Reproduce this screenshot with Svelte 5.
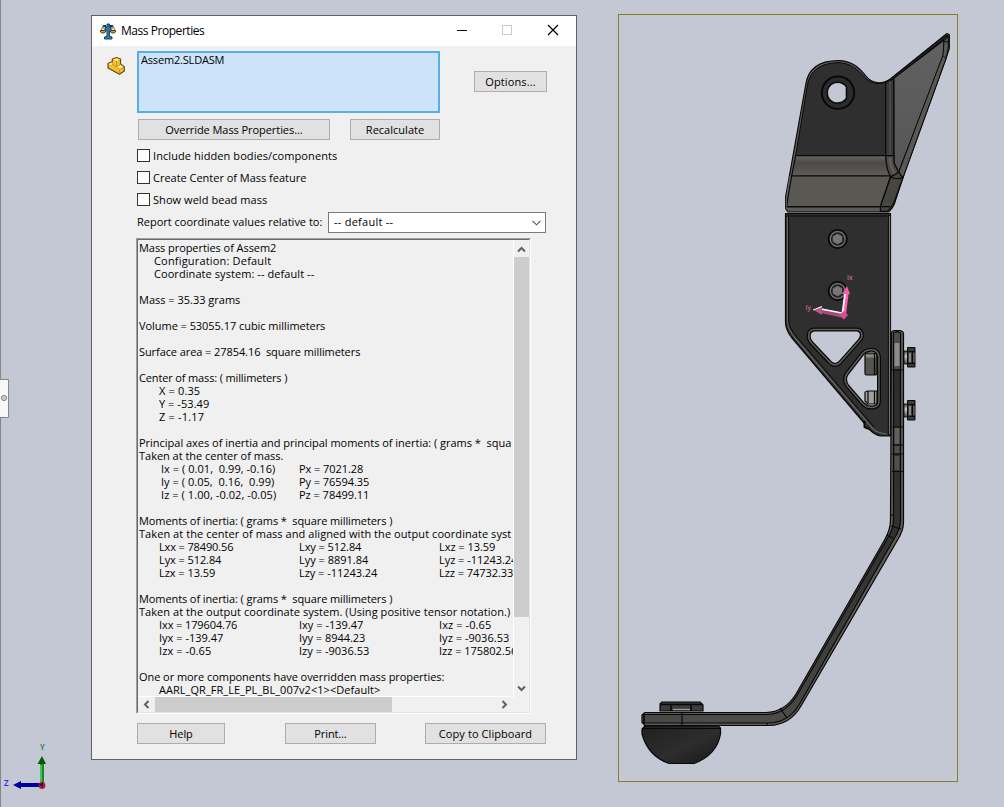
<script>
  // Spreads the letters so that a label takes the given width.
  function fit(node, width) {
    const natural = node.getBoundingClientRect().width;
    const count = node.textContent.length;
    node.style.letterSpacing = (width - 0.7 - natural) / count + 'px';
    node.style.width = width + 'px';
  }

  // Each line is a list of [left, width, text] runs.
  const lines = [
    [[0, 138, 'Mass properties of Assem2']],
    [[15, 118, 'Configuration: Default']],
    [[15, 161, 'Coordinate system: -- default --']],
    [],
    [[0, 102, 'Mass = 35.33 grams']],
    [],
    [[0, 187, 'Volume = 53055.17 cubic millimeters']],
    [],
    [[0, 222, 'Surface area = 27854.16  square millimeters']],
    [],
    [[0, 149, 'Center of mass: ( millimeters )']],
    [[20, 42, 'X = 0.35']],
    [[20, 51, 'Y = -53.49']],
    [[20, 46, 'Z = -1.17']],
    [],
    [[0, 373, 'Principal axes of inertia and principal moments of inertia: ( grams *  squa']],
    [[0, 145, 'Taken at the center of mass.']],
    [[22, 115, 'Ix = ( 0.01,  0.99, -0.16)'], [160, 65, 'Px = 7021.28']],
    [[22, 114, 'Iy = ( 0.05,  0.16,  0.99)'], [160, 71, 'Py = 76594.35']],
    [[22, 116, 'Iz = ( 1.00, -0.02, -0.05)'], [160, 71, 'Pz = 78499.11']],
    [],
    [[0, 254, 'Moments of inertia: ( grams *  square millimeters )']],
    [[0, 373, 'Taken at the center of mass and aligned with the output coordinate syst']],
    [[20, 75, 'Lxx = 78490.56'], [160, 63, 'Lxy = 512.84'], [300, 57, 'Lxz = 13.59']],
    [[20, 63, 'Lyx = 512.84'], [160, 70, 'Lyy = 8891.84'], [300, 79, 'Lyz = -11243.24']],
    [[20, 57, 'Lzx = 13.59'], [160, 79, 'Lzy = -11243.24'], [300, 75, 'Lzz = 74732.33']],
    [],
    [[0, 254, 'Moments of inertia: ( grams *  square millimeters )']],
    [[0, 372, 'Taken at the output coordinate system. (Using positive tensor notation.)']],
    [[20, 79, 'Ixx = 179604.76'], [160, 65, 'Ixy = -139.47'], [300, 53, 'Ixz = -0.65']],
    [[20, 65, 'Iyx = -139.47'], [160, 67, 'Iyy = 8944.23'], [300, 71, 'Iyz = -9036.53']],
    [[20, 53, 'Izx = -0.65'], [160, 71, 'Izy = -9036.53'], [300, 79, 'Izz = 175802.56']],
    [],
    [[0, 306, 'One or more components have overridden mass properties:']],
    [[20, 222, 'AARL_QR_FR_LE_PL_BL_007v2<1><Default>']]
  ];

  // Left edge of a run measured from the end of the previous one.
  const gap = (line, i) => (i === 0 ? line[0][0] : line[i][0] - line[i - 1][0] - line[i - 1][1]);

  const checks = [
    [185, 'Include hidden bodies/components'],
    [154, 'Create Center of Mass feature'],
    [115, 'Show weld bead mass']
  ];

  const slots = [
    'M814 329.500H857C862 330 863.500 336 860 340L841 361.500Q835 368.500 829 361.500L811 342.500C807 337 808 330 814 329.500Z',
    'M863 353Q867 349 874 350Q879 352 879 358V401Q879 407.500 872 407.500Q867 408 863 404L847 385.500Q843 379 847 373.500Z'
  ];
</script>

<main class="viewport">
  <svg class="scene" width="1004" height="807" viewBox="0 0 1004 807">
    <defs>
      <linearGradient id="bend" x1="0" y1="0" x2="0" y2="1">
        <stop offset="0" stop-color="#68665f" /><stop offset=".35" stop-color="#4b4a46" /><stop offset="1" stop-color="#5d5c57" />
      </linearGradient>
      <linearGradient id="wing" x1="0" y1="1" x2="0" y2="0">
        <stop offset="0" stop-color="#565656" /><stop offset="1" stop-color="#616161" />
      </linearGradient>
      <linearGradient id="arm" x1="0" y1="0" x2="0" y2="1">
        <stop offset="0" stop-color="#2b2b2b" /><stop offset=".6" stop-color="#333" /><stop offset="1" stop-color="#4a4946" />
      </linearGradient>
      <linearGradient id="ball" x1="0" y1="0" x2="1" y2="1">
        <stop offset="0" stop-color="#202020" /><stop offset=".55" stop-color="#2d2d2d" /><stop offset="1" stop-color="#181818" />
      </linearGradient>
      <linearGradient id="screw" x1="0" y1="0" x2="0" y2="1">
        <stop offset="0" stop-color="#444" /><stop offset=".4" stop-color="#d0d0d0" /><stop offset="1" stop-color="#444" />
      </linearGradient>
    </defs>

    <path d="M.5 0V807" stroke="#85858a" />
    <path d="M0 379.500H8.500V417.500H0" fill="#f8f8f8" stroke="#85858a" />
    <circle cx="4" cy="398" r="2.600" fill="#ccc" stroke="#888" />
    <rect x="618.500" y="14.500" width="339" height="767" fill="none" stroke="#858025" />

    <!-- upper bracket -->
    <g transform="translate(770 20) scale(.33333)" stroke="#080808" stroke-width="3.500" stroke-linejoin="round">
      <path d="M47 566V530L107 195C114 145 150 122 205 122C247 122 268 145 285 165C306 192 335 195 362 176L530 41L538 44V85L528 116L399 473L373 552Q369 563 356 576H54Z" fill="#5d5b56" />
      <path d="M77 407L112 197C119 152 152 129 205 128C244 129 265 151 281 169C302 192 325 194 347 187V407Z" fill="#2f2f2f" stroke-width="3" />
      <path d="M347 187Q361 184 372 174V407H347Z" fill="#393938" />
      <path d="M360 183V405" stroke="#4d4c49" stroke-width="5" />
      <path d="M372 174L522 60V105L386 457L372 429Z" fill="url(#wing)" />
      <path d="M362 176L526 45L534 48L372 174" fill="#222" stroke-width="3" />
      <path d="M522 62L535 49V84L528 116L399 473L386 457L519 105Z" fill="#5a5852" stroke-width="3" />
      <path d="M523 65H537M518 106L528 116" stroke-width="3" />
      <path d="M77 407H347L351 440L362 468H65Z" fill="url(#bend)" />
      <path d="M347 407H372V429L386 457L362 471Q349 449 347 407Z" fill="#4d4b47" />
      <path d="M359 413Q361 441 375 463" stroke="#656158" stroke-width="6" fill="none" />
      <path d="M65 468H362L331 560H50L54 530Z" fill="#595853" />
      <path d="M362 471L386 457L399 473L370 552Q362 565 351 574H331V560Z" fill="#484641" />
      <path d="M362 471Q380 480 399 473M331 560H360M47 560H331" fill="none" />
      <path d="M59 470L49 540V568" fill="none" stroke="#77746d" stroke-width="2" />
      <circle cx="204" cy="218" r="48.500" fill="#2c2c2c" stroke-width="6" />
      <path d="M175 218C175 201 188 190 203 190Q217 190 226 201V235Q217 246 203 246C186 246 175 235 175 218Z" fill="#c4c8d4" stroke="#080808" stroke-width="11" />
      <path d="M175 218C175 201 188 190 203 190Q217 190 226 201V235Q217 246 203 246C186 246 175 235 175 218Z" fill="#c4c8d4" stroke="#c4c8d4" stroke-width="2" />
    </g>

    <!-- mounting plate -->
    <g stroke="#080808" stroke-width="1.200" stroke-linejoin="round">
      <path fill-rule="evenodd" fill="#2f2f2f" d="M785.500 213.500H890.500V436H881Q875 435 870 430L792 338Q785.500 330 785.500 322Z{slots[0]}{slots[1]}" />
      <path d="M786.500 216H887M888.500 215V435" />
      <path d="M889.500 216V434" stroke="#7a7770" />
      <path d="M787.500 217V322Q788 329 795 338L873 429Q877 433 887 434" fill="none" stroke="#66645e" />
      <path d="M788.700 217V321Q789 328 796 336L874 427" fill="none" stroke-width="1" />
      <rect x="865" y="353" width="12" height="22" rx="1.500" fill="#555451" />
      <path d="M866 356H876" stroke="#888" stroke-width="3" />
      <path d="M865 393Q865 391 868 391H877V404H868L865 401Z" fill="#a0a09e" />
      <path d="M868 391V403M874.500 353V375M874.500 391V404" />
      <path d="M864.500 421V427L869 429" fill="#444" stroke-width="2" />
      {#each slots as d}
        <path {d} fill="none" stroke-width="4" />
        <path {d} fill="none" stroke="#5f5e5a" stroke-width="1.500" />
      {/each}
      {#each [239, 291] as y}
        <circle cx="837.700" cy={y} r="9.300" fill="#222" stroke-width="1.500" />
        <circle cx="837.700" cy={y} r="7.400" fill="#1c1c1c" stroke="#777" stroke-width="1.200" />
        <path d="M837.700 {y - 5}L842 {y - 2.500}V{y + 2.500}L837.700 {y + 5}L833 {y + 2.500}V{y - 2.500}Z" fill="#777" stroke="#777" stroke-width=".6" />
      {/each}
    </g>

    <!-- principal axes marker -->
    <path d="M847 291L844 314" stroke="#ff5fac" stroke-width="4" />
    <path d="M845 294L842.500 313" stroke="#fff" stroke-width="1.800" />
    <path d="M842 294L847 286L850 294Z" fill="#f25ca8" />
    <path d="M821 311L844 316" stroke="#a8487b" stroke-width="4" />
    <path d="M821 309L842 313" stroke="#fff" stroke-width="1.300" />
    <path d="M813.500 310L822 306V315Z" fill="#bb568d" /><path d="M813 310L822 306.500" stroke="#fff" />
    <path d="M839 315L844 311L848 315L844 319.500Z" fill="#d4508f" />
    <text x="847" y="279.500" class="axis">Ix</text><text x="805.500" y="309.500" class="axis">Iy</text>

    <!-- arm, screws and foot -->
    <g stroke="#080808" stroke-width="1.200" stroke-linejoin="round">
      {#each [347, 400] as y}
        <rect x="904" y={y + 4} width="3.500" height="13" fill="url(#screw)" stroke-width=".8" />
        <path d="M907.500 {y + .5}H915V{y + 20}H907.500Z" fill="#3b3b39" stroke-width="1" />
        <path d="M907.500 {y + 4.500}H915M907.500 {y + 16.500}H915M912.500 {y + 4}V{y + 16}" />
        <path d="M910 {y + 6}V{y + 15}" stroke="#a5a5a2" stroke-width="1.500" />
        <path d="M914 {y + 6}V{y + 15}" stroke="#777" stroke-width="1" />
      {/each}
      <path d="M891.500 333Q891.500 330.500 895 330.500H900Q903.500 331 903.500 334V522Q903.500 531 897 541L801 706Q790 725 769 725.500H645L642 722.500V715L645 712.500H766Q785 712 796 694L884 541Q890.500 530 890.500 520Z" fill="#5e5c56" />
      <path d="M893.500 333V520Q893.500 529 887 539L799 692Q787 714 767 714.500H644V723H768Q788 723 799 705L894 539Q900.500 529 900.500 520V333Q897 330 893.500 333Z" fill="url(#arm)" />
      <path d="M897 333V369" stroke="#4b4b4b" stroke-width="6" />
      <path d="M897 343V366" stroke="#8b8b8b" stroke-width="5" /><path d="M897 428V444" stroke="#62605b" stroke-width="5" />
      <path d="M897 446V453M897 456V470" stroke="#504f4a" stroke-width="5" />
      <path d="M683 719H766Q781 718 789 710" fill="none" stroke="#4d4b48" stroke-width="6" />
      <path d="M892 370H903M892 427H903M892 445H903M892 454H903M892 471.500H903M891 515H894M891 526L901 529M887 535L893 538M780 708L787 718M767 723V726M682 713V725" />
      <path d="M644 715V724" />
      <path d="M660 711V704L662 702H700L703 705V711Z" fill="#3b3c3b" />
      <path d="M661 704.500H702M671 704V711M691 704V711" stroke-width="1.600" />
      <path d="M673 709.500H690" stroke="#a3a3a1" />
      <path d="M642 729L645 726H718L720.500 728V734Q717 755 694 763.500H669Q648 756 642 734Z" fill="url(#ball)" />
      <path d="M643 728.500H720" />
    </g>

    <!-- view triad -->
    <path d="M42 785V764" stroke="#178b2c" stroke-width="4" /><path d="M41 783V765" stroke="#6fe078" stroke-width="1.200" />
    <path d="M37.500 764L42 756L46 764Z" fill="#055c05" />
    <path d="M41 785H20" stroke="#0000a0" stroke-width="4" /><path d="M13 785L21 781V789Z" fill="#0000a0" />
    <circle cx="42" cy="785.500" r="3.400" fill="#c91420" /><path d="M39 785L43 782V787Z" fill="#061681" />
    <text x="40" y="749.500" class="triad green">Y</text><text x="4" y="785.500" class="triad blue">Z</text>
  </svg>

  <section class="dialog">
    <header>
      <svg class="scale" width="16" height="17" viewBox="0 0 16 17">
        <path d="M7 1H9.500V4H11V7L9.500 8V13L12 14V16H4.500V14L7 13V8L5.500 7V4H7Z" fill="#287ca5" stroke="#154765" />
        <path d="M3 3H6M10 3H13" stroke="#17364a" stroke-width="2" />
        <path d="M3 3L.8 8H5.500ZM13 3L10.500 8H15.300Z" fill="#dce3e5" stroke="#50575b" stroke-width=".8" />
        <path d="M.5 7.500H5.500V9L4 10H2L.5 9ZM10.500 7.500H15.500V9L14 10H12L10.500 9Z" fill="#e29b20" stroke="#58401d" />
      </svg>
      <span class="title"><span class="run" use:fit={84}>Mass Properties</span></span>
      <svg width="106" height="12" viewBox="0 0 106 12" fill="none">
        <path d="M1 6.500H11" stroke="#000" /><rect x="46.500" y="1.500" width="9" height="9" stroke="#ccc" />
        <path d="M92 1L102 11M102 1L92 11" stroke="#000" stroke-width="1.200" />
      </svg>
    </header>

    <div class="top">
      <svg width="18" height="18" viewBox="0 0 18 18" stroke-linejoin="round">
        <path d="M1 6.500L5.300 4.500V2L9.500 .6L13.500 2V7L17.300 9.800V14L12.500 17.300L1 11Z" fill="#f5c02c" stroke="#6b4813" stroke-width="1.200" />
        <path d="M6 2.300L9.500 1.300L12.800 2.300L9.500 3.700ZM9.800 9.300L13.500 7.700L16.600 10L12.500 12.300ZM1.700 6.900L5.300 5.200V7.500L3.500 8Z" fill="#ffe895" />
        <path d="M5.300 4.500V7.500L9.500 9.500L12.500 12.500V17M12.500 12.500L17 10M9.500 4V9.300L13.500 7.500" fill="none" stroke="#b98a20" stroke-width=".8" />
      </svg>
      <div class="selection"><span class="run" use:fit={84}>Assem2.SLDASM</span></div>
      <button class="options"><span class="run" use:fit={51}>Options...</span></button>
    </div>

    <div class="actions">
      <button class="override"><span class="run" use:fit={138}>Override Mass Properties...</span></button>
      <button class="recalc"><span class="run" use:fit={59}>Recalculate</span></button>
    </div>

    <div class="checks">
      {#each checks as [width, label]}
        <label><i></i><span class="run" use:fit={width}>{label}</span></label>
      {/each}
    </div>

    <div class="coords">
      <span class="run" use:fit={186}>Report coordinate values relative to:</span>
      <div class="combo">
        <span class="run" use:fit={60}>-- default --</span>
        <svg width="9" height="6" viewBox="0 0 9 6" fill="none"><path d="M.5 .8L4.500 4.800L8.500 .8" stroke="#555" stroke-width="1.100" /></svg>
      </div>
    </div>

    <div class="report">
      <div class="inner">
        <div class="text">
          {#each lines as line}
            <div class="line">
              {#each line as run, i}
                <span class="run" style:margin-left="{gap(line, i)}px" use:fit={run[1]}>{run[2]}</span>
              {/each}
            </div>
          {/each}
        </div>
        <div class="vbar">
          <svg width="9" height="7" viewBox="0 0 9 7"><path d="M1 5.500L4.500 2L8 5.500" fill="none" stroke="#606060" stroke-width="2" /></svg>
          <div class="vthumb"></div>
          <svg class="down" width="9" height="7" viewBox="0 0 9 7"><path d="M1 1.500L4.500 5L8 1.500" fill="none" stroke="#606060" stroke-width="2" /></svg>
        </div>
        <div class="hbar">
          <svg width="7" height="9" viewBox="0 0 7 9"><path d="M5.500 1L2 4.500L5.500 8" fill="none" stroke="#606060" stroke-width="2" /></svg>
          <div class="hthumb"></div>
          <svg class="right" width="7" height="9" viewBox="0 0 7 9"><path d="M1.500 1L5 4.500L1.500 8" fill="none" stroke="#606060" stroke-width="2" /></svg>
        </div>
      </div>
    </div>

    <footer>
      <button class="help"><span class="run" use:fit={24}>Help</span></button>
      <button class="print"><span class="run" use:fit={33}>Print...</span></button>
      <button class="copy"><span class="run" use:fit={94}>Copy to Clipboard</span></button>
    </footer>
  </section>
</main>

<style>
  :global(body) { margin: 0; overflow: hidden; }
  .viewport { position: relative; width: 1004px; height: 807px; background: #c4c8d4; overflow: hidden; font: 11px/13px "Open Sans", "Noto Sans", sans-serif; color: #000; }
  .scene { display: block; }
  .axis { font: 7px "Open Sans", sans-serif; fill: #e277ae; }
  .triad { font: 600 8px "Open Sans", sans-serif; }
  .green { fill: #168027; }
  .blue { fill: #2323ef; }
  .dialog { position: absolute; left: 91px; top: 15px; width: 486px; height: 745px; box-sizing: border-box; border: 1px solid #606269; background: #f0f0f0; display: flex; flex-direction: column; }
  .run { display: inline-block; white-space: pre; flex: none; }
  header { height: 30px; flex: none; display: flex; align-items: center; background: #fff; padding: 0 18px 0 8px; }
  header .scale { margin-right: 5px; }
  .title { flex: 1; font-size: 12px; padding-bottom: 2px; }
  header > svg:last-child { margin-right: -4px; margin-top: -2px; }
  .top { display: flex; align-items: flex-start; padding: 5px 0 0 15px; height: 62px; flex: none; }
  .top > svg { margin: 6px 12px 0 0; width: 18px; flex: none; }
  .selection { width: 303px; height: 62px; box-sizing: border-box; border: 2px solid #57b0e3; background: #cde4f8; padding: 0 2px; }
  button { box-sizing: border-box; height: 21px; border: 1px solid #adadad; border-radius: 0; background: #e1e1e1; padding: 0; font: inherit; color: inherit; display: flex; justify-content: center; align-items: center; }
  .options { width: 73px; margin: 20px 0 0 34px; }
  .actions { display: flex; gap: 20px; padding: 6px 0 0 46px; }
  .override { width: 192px; }
  .recalc { width: 90px; }
  .checks { display: flex; flex-direction: column; gap: 9px; padding: 9px 0 0 45px; }
  label { display: flex; align-items: center; gap: 3px; height: 13px; }
  i { width: 13px; height: 13px; box-sizing: border-box; border: 1px solid #333; background: #fff; }
  .coords { display: flex; align-items: center; gap: 5px; padding: 6px 0 0 45px; }
  .coords .run { padding-bottom: 2px; }
  .combo { width: 218px; height: 21px; box-sizing: border-box; border: 1px solid #7a7a7a; background: #fff; display: flex; align-items: center; justify-content: space-between; padding: 0 4px 0 5px; }
  .report { width: 395px; height: 476px; flex: none; box-sizing: border-box; margin: 5px 0 0 44px; border: 1px solid; border-color: #a0a0a0 #fff #fff #a0a0a0; }
  .inner { width: 100%; height: 100%; box-sizing: border-box; border: 1px solid; border-color: #696969 #e3e3e3 #e3e3e3 #696969; display: grid; grid-template-columns: 375px 16px; grid-template-rows: 457px 15px; }
  .text { overflow: hidden; padding: 1px 0 0 1px; border-bottom: 1px solid #fff; }
  .line { display: flex; height: 13px; }
  .vbar { border-left: 1px solid #fff; display: flex; flex-direction: column; align-items: center; }
  .vbar svg { margin: 6px 0 4px; flex: none; }
  .vthumb { width: 15px; height: 360px; background: #cdcdcd; }
  .vbar .down { margin: 68px 0 0; }
  .hbar { grid-column: 1 / 3; display: flex; align-items: center; }
  .hbar svg { margin: 0 5px; flex: none; }
  .hthumb { width: 237px; height: 15px; background: #cdcdcd; }
  .hbar .right { margin-left: 109px; }
  footer { display: flex; padding: 9px 0 0 45px; }
  .help { width: 88px; }
  .print { width: 91px; margin-left: 60px; }
  .copy { width: 121px; margin-left: 49px; }
</style>
